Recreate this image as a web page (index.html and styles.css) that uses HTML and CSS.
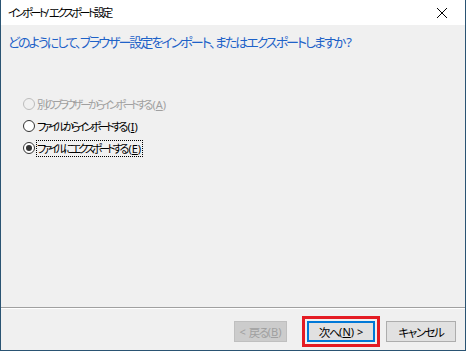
FILE: index.html
```html
<!DOCTYPE html>
<html lang="ja">
<head>
<meta charset="utf-8">
<link rel="stylesheet" href="styles.css">
</head>
<body>
<div class="window">
  <div class="titlebar">
    <span class="title">インポート<span class="key">/</span>エクスポート設定</span>
    <svg class="close" width="12" height="12" viewBox="0 0 12 12"><path d="M1 1L11 11M11 1L1 11" stroke="#000" stroke-width="1" fill="none"/></svg>
  </div>
  <div class="content">
    <div class="instruction">どのようにして、ブラウザー設定をインポート、 またはエクスポートしますか<span class="key">?</span></div>
    <div class="options">
      <div class="option disabled"><span class="radio"></span><span class="label">別のブラウザーからインポートする<span class="key">(<u>A</u>)</span></span></div>
      <div class="option"><span class="radio"></span><span class="label">ファイルからインポートする<span class="key">(<u>I</u>)</span></span></div>
      <div class="option"><span class="radio checked"></span><span class="label focus">ファイルにエクスポートする<span class="key">(<u>E</u>)</span></span></div>
    </div>
  </div>
  <div class="footer">
    <div class="buttons">
      <span class="btn disabled"><span class="key">&lt; </span>戻る<span class="key">(<u>B</u>)</span></span>
      <span class="highlight"><span class="btn default">次へ<span class="key">(<u>N</u>) &gt;</span></span></span>
      <span class="btn">キャンセル</span>
    </div>
  </div>
</div>
</body>
</html>
```
FILE: styles.css
```css
* { box-sizing: border-box; }
html, body { margin: 0; padding: 0; }
body {
  width: 466px;
  height: 351px;
  font-family: "Noto Sans CJK JP", "Noto Sans", sans-serif;
  font-feature-settings: "palt";
  color: #000;
  overflow: hidden;
}
.window {
  width: 466px;
  height: 351px;
  border: 1px solid #2a5473;
  border-top: none;
  background: #f0f0f0;
  display: flex;
  flex-direction: column;
}
.titlebar {
  height: 25px;
  background: #fff;
  display: flex;
  align-items: center;
  justify-content: space-between;
  padding: 0 17px 0 7px;
  flex: none;
}
.title {
  font-size: 11px;
  line-height: 16px;
  letter-spacing: -2.5px;
  white-space: nowrap;
}
.close { display: block; }
.content {
  flex: 1;
  padding: 7px 0 0 7px;
}
.instruction {
  font-size: 13px;
  line-height: 20px;
  color: #1e62c8;
  letter-spacing: -2px;
  white-space: nowrap;
}
.key {
  letter-spacing: 0;
  font-family: "Noto Sans", sans-serif;
  font-feature-settings: normal;
}
.instruction .key { margin-left: 2px; }
.options {
  margin-top: 44px;
  padding-left: 15px;
  display: flex;
  flex-direction: column;
  gap: 6px;
}
.option {
  display: flex;
  align-items: center;
  height: 16px;
  font-size: 11px;
  gap: 1px;
}
.label {
  line-height: 14px;
  letter-spacing: -3px;
  padding: 0 1px 0 0;
  border: 1px solid transparent;
  white-space: nowrap;
}
.label .key { font-size: 11px; margin-left: 2px; }
.label.focus { border: 1px dotted #000; }
.radio {
  width: 12px;
  height: 12px;
  border: 1px solid #333;
  border-radius: 50%;
  background: #fff;
  display: flex;
  align-items: center;
  justify-content: center;
  flex: none;
}
.radio.checked::after {
  content: "";
  width: 6px;
  height: 6px;
  border-radius: 50%;
  background: #333;
}
.option.disabled { color: #a0a0a0; }
.option.disabled .radio { border-color: #bcbcbc; background: #f0f0f0; }
.footer {
  flex: none;
  height: 43px;
  border-top: 1px solid #a0a0a0;
  box-shadow: inset 0 1px 0 #fff;
  padding: 13px 9px 0 0;
}
.buttons {
  display: flex;
  justify-content: flex-end;
  align-items: center;
  height: 21px;
}
.btn {
  display: flex;
  align-items: center;
  justify-content: center;
  height: 21px;
  width: 70px;
  border: 1px solid #adadad;
  background: #e1e1e1;
  font-size: 11.5px;
  letter-spacing: -1.4px;
  white-space: pre;
}
.btn .key { font-size: 11px; }
.btn.disabled {
  width: 53px;
  color: #a0a0a0;
  background: #cccccc;
  border-color: #bfbfbf;
  margin-right: 15px;
}
.btn.default {
  width: 68px;
  border: 2px solid #0078d7;
}
.highlight {
  display: block;
  border: 3px solid #e41b23;
  padding: 2px;
  margin: -5px 6px -5px 0;
}
u { text-decoration-thickness: 1px; text-underline-offset: 1px; }
```
